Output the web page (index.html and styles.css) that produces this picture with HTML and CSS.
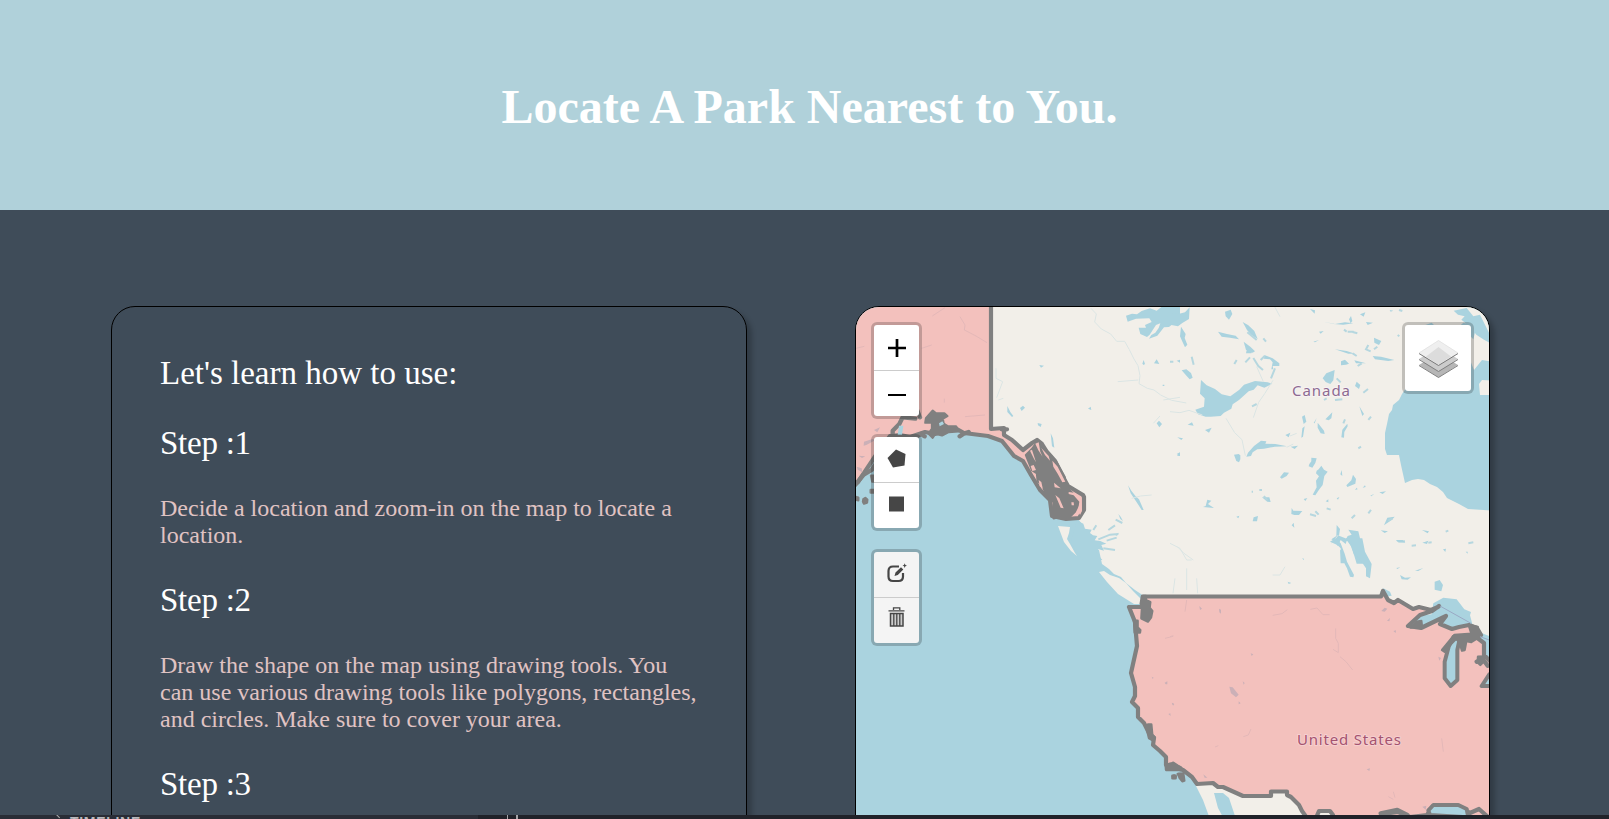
FILE: index.html
```html
<!DOCTYPE html>
<html lang="en">
<head>
<meta charset="utf-8">
<title>Locate A Park</title>
<link rel="stylesheet" href="styles.css">
</head>
<body>
<header class="hero"><h1 class="hero-title">Locate A Park Nearest to You.</h1></header>
<main class="content">
  <section class="card guide">
    <h2 class="guide-heading">Let's learn how to use:</h2>
    <h2 class="guide-heading step">Step :1</h2>
    <p class="guide-text">Decide a location and zoom-in on the map to locate a location.</p>
    <h2 class="guide-heading step">Step :2</h2>
    <p class="guide-text">Draw the shape on the map using drawing tools. You can use various drawing tools like polygons, rectangles, and circles. Make sure to cover your area.</p>
    <h2 class="guide-heading step">Step :3</h2>
  </section>
  <section class="card map">
    <svg class="map-canvas" viewBox="856 307 633 520" width="633" height="520">
      <g class="tiles">
      <!-- Canadian mainland and islands -->
      <path class="land" d="M980 300V430L1010 440 1060 519H1078L1082 524 1083 532 1091 538 1093 545 1099 550 1102 564 1109 569 1114 574 1121 577 1126 583 1135 590 1144 596V604H1385L1500 660V511L1468 509 1459 504 1447 498 1443 492 1437 487 1430 484 1424 480 1418 479 1412 480 1405 483 1403 474 1401 465 1399 455 1387 455 1385 449 1385 433 1387 424 1389 414 1392 410 1393 405 1399 400 1402 394 1415 375 1462 340 1474 370 1482 360 1500 363V300Z"/>
      <path class="land" d="M1058 526L1070 527 1069 533 1067 539 1070 544 1075 553 1077 556 1071 551 1064 542Z M1099 572L1104 571 1110 575 1119 578 1126 583 1133 591 1141 599 1142 604 1134 604 1118 594 1107 582Z M1479 384L1482 380 1500 381V395L1480 395Z"/>
      <path class="land" d="M1195 784L1203 800 1210 819H1340V808L1290 785 1213 781Z"/>
      <path class="water" d="M1214 793L1223 793 1229 798 1236 819H1224L1218 808Z"/>
      <!-- lakes, upper centre -->
      <g transform="translate(850 300) scale(.33333)">
        <path class="water" d="M828 47l18-6 15 2 14-10 25-8 20 7 15-12 55 0v35l-20 0 5 12-18 14-15 1-20 25-25 9 7-11 12-7 10-14 5-14-13 5-19 29-8 7-20-9-5-19 22 0-3-8 20-9-7-11-40 1-25 9z M877 191l4-11 4 12-4 3z M912 190l8-12 8 14z M920 370l7-8 9 10-8 10z M834 556l10 16 13 17 10 9 14 32-6 0-14-22-19-28z M472 318l9 18 9 12-4 3-14-15z M510 324l9-7 6 6-10 10z M563 369l12 3-3 9-8-5z M602 400l7 15 4 28-7-4z M805 642l7 8 7 13-8-6z M568 195l14 2-9 6z M714 326l8-6 2 10z M980 182l10-3v9z M980 462l10-5v11z M938 254h5v4h-5z M795 705l12-7-6 9z"/>
        <path class="river" d="M723 25l16 17-5 24 20 21 28 15 18 22 24 0 14 25 14 28 12 20 6 30-3 24 25 14 20 5 20 15 33 16 44 8 M438 205v30l20 10-18 48 M445 300l15-5 M803 245l62-5 M940 300l50-8 M845 595l27-7 33-3 M910 370l20-22"/>
        <path class="water" d="M680 661l20 10 5 15 20 3-5 10 9 7 13 2-8 13 17 2 18 8-15 4 8 17-18-5-5 12 18 21h-60l-35-50z"/>
        <path class="river strong" d="M745 718l35-14 25-2 M770 722l30-9 M730 690l9-14 M760 745l35 5 M797 659l20 10 M775 690l20-14"/>
      </g>
      <!-- lakes, upper right -->
      <g transform="translate(1170 300) scale(.33333)">
        <path class="water" d="M-8 38l33 4 20-5 14-15-2 35-20 12-13 10-32-6z M33 80l14 22-3 12 8 20-7 8-7-15-8-18z M35 211l14-3 14 11 5 14-9 5-9-10z M93 240l17 16 25 11 20 16 26 6 27-20 14-15 33-11 38 4 14 4-24 12-20-7-12 13-15 5-29 26-19 13-4 13-22 12-10 10-30 2-15 0-23-7-8-14 26-9 2-25-14-14z M229 470l5-12 18-20 21-16 16 2-3 7 30 1 35 7-37 1-32 6-20 2-14 9-5 11z M192 464l14-2 5 4 0 12-4 9-8-4z M458 235l11-15 25-10-4 31-9 11-14-6z M418 492l6-8 0-11 16 2-4 14-9 14-11-4z M440 512l6-4 8-11 8 12 11 6-10 13-5 27-11 14-11 17-8-2 12-22-2-20 9-13-9-9z M330 532l12-15 15 1-7 10-15 8z M165 35l17-6 5 13-10 17-10-10z M144 95l27 7 26 5 10 11-27-5-25-3z M218 66l17 10 18 17 10 24-20-13-12-14z M283 165l25 10 20 15 0 8-20 0 2 10-6 0 4-21-8-9-18-2z M221 125l20 15 14 14-7 4-20-8z M230 150l18 2-4 8-16 0z M535 689l30 5 12 50 17 47h-34l-15-50-17-23 5-10 12-4z M500 675l10 12-3 20 25 10-5 15-15-12-9 18-10-15-9-5 15-10z M510 748l12 15v27h-10z M608 168l25 2 40 10-18 3-40-5z M495 148l35 5 25 8-20 0z M513 184l12-5 12 12-9 3-15 2z M553 181l35 9-30 0z M612 113l22 10-7 12-14-7z M560 245l11 10-4 12-12-9z M568 319l14 23-5 6z M443 368l19 24 2 10-12-2-9-17z M396 350l8-5 5 20-8 7z M397 385l7-6-5 31-5 3z M431 369l9-15-6 16z M466 358l21-21-3 18-8 6z M517 389l15-18 1 8-10 17-1 17-8-1z M529 556l15-15 5-17 9 13-2 14-24 10z M511 523l4-13 2 18z M276 592l22 0 4 14-10-1z M99 621l8-3 5-19 12 3-10 10 18 12z M105 390l20-7-8 15z M53 374l13-7 5 10z M22 412l17 3-5 5z M21 467l9-9 0 10z M346 405l15-7-5 14z M362 440l22-3-10 10z M248 664l3-12 13-4-3 16z M199 650l9-3-3 8z M364 642l1-18 5 8 27 1-10 12-14 0z M365 676l6-8 2 15z M642 676l10-23 22-3-8 9z M756 690l21 4-4 6z M632 691l22 3-10 5z M555 570l5-7 3 5z M578 563l7-7 2 5z M601 587l12-6-9 8z M628 577l20-3-10 8z M467 604l8-6v9z M500 595l8-4-4 8z M401 597l11-3-6 9z M430 125l17-5-12 7z M447 95l14-2-9 8z M461 65l34 7 30-5 25 3-30 4-29-2z M420 27l15 4-1 10z M537 58l6-10 4 15-5 7z M570 43l16-6-5 13z M588 66l21 2-16 7z M659 30l11 2-8 3z M851 32l39-8 20 25 20-5 30 60v25l-18-10-23-15-20-25-25-20 10-10-20-5z M760 77l25-9 10 10z M870 77l10-9 40 10-10 40z"/>
        <path class="river" d="M0 335l30 3 27-7 40 14 M168 355l26 43 22 21 10 48 M250 353l16-46 18-26 25-40 M22 740l20 20 28 20 M260 200l20 45 M314 20l16 30 M350 442l20-10 M360 408l20-8 M485 730l20-25"/>
        <path class="river strong" d="M232 97l28 23 M200 180l-7 12 M250 174l15 24 14 12 M545 655l10-10 M603 630l-8 10 M655 662l13-7 M685 725l20-1 M725 737l13-1 M775 728l10-1 M827 695l8-3 M895 730l15-3 M0 185l10 0 M65 170l6 24 M470 625l12 4 M420 643l18 5 M446 644l-10-10 M580 278l14-11 M595 360l8-10 M495 300l22-2 M470 295l-8 5 M565 445l8-5 M595 135l-7 13 14 6 M240 172l-14 15 M260 312l-14 7 M282 588l10 14 M268 570h8 M245 575h4 M683 105l5 4 M687 30l10 3 M533 95h18 M315 205l-12 30 M272 180l12-12 M280 115l8 10 M520 370l5-12 M548 160l12 8 M575 190l-12 8 M622 140l-10 8 M530 95l-8-6 M562 100l-14-4 M500 235l12 12"/>
      </g>
      <g transform="translate(1170 540) scale(.33333)">
        <path class="water" d="M530-5h47l8 40 20 37-5 43-12-6 0-24-21-31-15-10-12-33z M480 5l17-10 15 15 12 31 7 24 21 40-2 7-10-2-9-25-15-28-4-32-10-10z M794 125l15-5 10 15-5 19-20-5z M790 190l30-17 40 5 23 30 20 8-3 10 8 30-48 22-90-10-50 5-10 25-55-5 40-45 40-20 50-5z M640 145l20 10 5 12-20 3-14-15z M690 105l15 8 18-1-10 7-18-1z M850 285l30 0-13 45v90l-25 20-20-30v-70z M925 275l50 20v100l-55-60z M678 0h20l8 8-24-3z M735 92l25-8-15 9z M397 53l5 4-2 4z M353 125l11 4-8 3z M757 8l18-6-4 10z M819 28l9-2-2 10z M679 84l12-2-9 5z M887 35h6v6z"/>
        <path class="river" d="M0 10l30 15 20 35 15 0 M345 80l-15 25-22 0 M50 85v65 M80 115l3 45 M15 115l-6 45"/>
      </g>
      </g>
      <!-- Alaska -->
      <path class="state" d="M850 300H991V429L997 428.500 1004 428 1004 435 1012 440 1023 450 1032 443 1037 440 1042 444 1047 452 1055 461 1063 477 1068 486 1083 495 1084 497V510L1079 518 1066 519 1052 516 1050 500 1040 490 1031 475 1023 461 1014 456 1002 441 988 436 964 433 955 428 935 434 925 432 910 437 900 435 890 436 878 452 858 482 850 488Z"/>
      <g transform="translate(850 300) scale(.33333)">
        <path class="blotch" d="M228 355l20-23 10 8 25 0 9 8-14 8 3 15 12 8 25 0 8 15-30 2-20 10-20-5-8 12-12-12 10-15 0-18-20 0z M528 465l20-20 10-15 16 0 20 28 25 28 25 45 5 30 15 15 25 30-15 30-15 15-22 3-30-12 5-35-22-20-12-30-15-15-2-22-15-10z"/>
        <path class="border" d="M15 555l25-30 25-15 10-15 M128 410l0-18 20-20 10-20 38 4 M210 352l-10-25 M200 410l12-8 12 7 M329 409l12-8 15-5 M455 388h16"/>
        <path class="blotch" d="M63 527h12v18h-8z M62 570h12v8h-12z M40 598l6-4 6 5-1 9-9 3-3-6z M15 590l10 3v8l-10-2z M606 641l10-4 6 5-2 11-9 2z"/>
        <path class="water" d="M143 405l4-28 13 0-4 28z M267 370l10-6 5 8-13 7z"/>
        <path class="pink" d="M540 452l6-3 12 38-7-12z M556 431l10-4 5 28 7 15-13-19z M574 444l22 24 4 14-15-17z M607 482l16 18 23 45-9 2-14-26-13-21z M542 498l9-3 7 15-11 3z M566 540l8 6 4 18-9-5z M612 548l20 17-18-3z M616 585l12 10 13 30-9-2z M656 576l16 2 22 15 2 40-6 12-6-12 4-28-17-19-15-4z M664 607l7 0 1 9-7 0z"/>
        <path class="tint" d="M42 425l25-8 10 3-28 15-8 2z M20 500l15 5 2 12-14-8z M26 467l20 2-10 5z M72 390l18-8-8 15z"/>
        <path class="trail" d="M330 50l15 25-2 15 35 18 33 20 M247 48l38-25 M283 296v12 M345 350l60-5 M215 145l30-10 M18 145l25-6"/>
      </g>
      <!-- contiguous states -->
      <path class="state" d="M1143 596.500H1381L1383 591 1388 600 1394 603 1398 600 1408 606 1413 609 1419 607 1431 610 1438 607 1439 606 1432 611 1420 615 1408 626 1421 628 1446 616 1440 624 1452 629 1459 627 1469 625 1477 628 1481 635 1476 637 1484 643 1484 655 1492 663V830H1384L1382 814 1398 812 1410 817 1427 815 1433 806 1458 806 1470 813 1479 809 1488 817 1492 830H1333V815L1330 811 1319 811 1316 818H1307L1302 811 1299 805 1291 797 1287 795 1287 791.500H1271V796H1243L1223 787H1218L1213 783 1197 784 1192 777 1183 770 1166 765 1166 757 1160 751 1153 745 1154 738 1149 733 1144 723 1138 717V708L1132 702 1135 696V687L1131 673 1137 646 1135 622 1129 607H1143Z"/>
      <g transform="translate(1170 540) scale(.33333)">
        <path class="lake-line" d="M871 288l-20 2-15 30-12 45v50l18 23 20-18v-90z"/>
        <path class="lake-line" d="M780 825l-5-14 15-16h75l25 12 5 25z M960 400l-25 38 25 0"/>
        <path class="border" d="M632 820l50-10 30 15 M920 365l18-8 15 20"/>
        <path class="blotch" d="M816 330l37-45 52-4 24 9-25 16-15-3-5 27-8 2-8-27-10-8-20 20-14 18z M740 245l14-2 2 17-34 3z M924 350l19-1-2 16-10 10-8-8z M896 255l27 6 3 27-22-8z"/>
        <path class="blotch" d="M0 672l10-4 28 19v3l-38-2z M24 702l16-2 3 22-6 2-8-10z M7 707h10v8h-10z"/>
        <path class="boundary" d="M810 198l93 52 M930 290l28 10"/>
        <path class="tint" d="M178 440l10 2 18 22-8 8-15-12z M634 213l10-10 8 3-8 9z M147 206l6 3 0 12-5-4z M88 198l8 8-6 4z M670 273l8-2-1 8z M651 242l9-8-2 10z M757 800l12-3-2 12z M100 703l12 10-8 0z M6 488l7 5-5 3z M218 424l6 5-3 5z M206 484l6 6-6 3z M805 350l8 4-5 8z M242 340l8 3-5 5z M590 688l10-3-2 8z"/>
        <path class="trail" d="M308 226l28-5 16-12 M421 208l20-4 18 20 20 0 M497 265v30l8 15 0 28-16-10 M510 350l18 15 20 25 M220 590l15-5 8-18 M815 595l5 40 M135 621l10-4 M45 215l5-35 M0 290l10-3 M670 755l5 18 M655 770l15 8"/>
      </g>
      <g transform="translate(850 540) scale(.33333)">
        <path class="blotch" d="M876 168l12 0 0 12 13 6-2 17 8 10-4 20-9 12-20-10 2-34-4-10z M852 242l11 0 0 20 8 8-1 8-16 0z M894 553l10 0 3 32 8 7-5 10-13-7-6-25z M947 676l13-5 32 10v9h-44z M968 709l5-3 4 4-5 4z M983 702h9v8z"/>
        <path class="tint" d="M905 410l6 3-3 4z M944 428l8-4 0 9-5 0z M965 488l7 3-2 6z M955 522l6-2 1 8z M948 484l6 3z"/>
        <path class="trail" d="M945 295l25-6"/>
      </g>
      <text class="place" x="1292" y="395.500" textLength="58">Canada</text>
      <text class="place place-us" x="1297" y="745" textLength="104">United States</text>
    </svg>
    <div class="tools">
      <div class="toolbar">
        <a class="tool"><svg width="45" height="45"><path d="M14 23H32M23 14V32" stroke="#000" stroke-width="2.700"/></svg></a>
        <a class="tool"><svg width="45" height="45"><path d="M14 24H32" stroke="#000" stroke-width="2.200"/></svg></a>
      </div>
      <div class="toolbar">
        <a class="tool"><svg width="45" height="45"><path d="M22 12.500L31.500 17 30.500 28.500 19 30.500 13.500 21Z" fill="#464646"/></svg></a>
        <a class="tool"><svg width="45" height="45"><path d="M15 13.500H30V28.500H15Z" fill="#464646"/></svg></a>
      </div>
      <div class="toolbar edit">
        <a class="tool"><svg width="45" height="45"><path d="M25 14.500H19Q14.500 14.500 14.500 19V24.500Q14.500 29 19 29H24.500Q29 29 29 24.500V21" fill="none" stroke="#464646" stroke-width="2.200"/><path d="M20.500 24L21.500 20.500 27 15.300 29.300 17.600 23.800 23Z M28.500 13.500L30 13 30.700 11.300 31.400 13 33 13.500 31.400 14.200 30.700 16 30 14.200Z" fill="#464646"/></svg></a>
        <a class="tool"><svg width="45" height="45"><path d="M16.500 15.500H29V28H16.500Z" fill="#ccc" stroke="#464646" stroke-width="1.500"/><path d="M14.500 12.800H30.500M19.500 12V9.800H25.800V12M19.800 16V28M22.800 16V28M25.800 16V28" fill="none" stroke="#464646" stroke-width="1.300"/></svg></a>
      </div>
    </div>
    <a class="layers"><svg width="66" height="66">
      <path d="M14 40L33.500 52.500 53 40 33.500 28Z" fill="#b6b6b6"/><path d="M14 40.500L33.500 52.500 53 40.500" fill="none" stroke="#808080"/>
      <path d="M14 34L33.500 46.500 53 34 33.500 22Z" fill="#ccc"/><path d="M14 34.500L33.500 46.500 53 34.500" fill="none" stroke="#808080"/>
      <path d="M14 28L33.500 40.500 53 28 33.500 15.500Z" fill="#efefef"/><path d="M21 31.500L33.500 22 46 31.500 33.500 40Z" fill="#dcdcdc"/><path d="M14 28.500L33.500 40.500 53 28.500" fill="none" stroke="#777"/><path d="M14 28L33.500 15.500 53 28" fill="none" stroke="#ddd" stroke-width=".7"/>
    </svg></a>
  </section>
</main>
<footer class="strip"><span class="strip-panel"><span class="strip-arrow"></span><span class="strip-label">TIMELINE</span></span><span class="strip-cursor"></span></footer>
</body>
</html>
```
FILE: styles.css
```css
* { box-sizing: border-box; }
body {
  margin: 0;
  height: 819px;
  overflow: hidden;
  display: flex;
  flex-direction: column;
  background: #3f4c59;
  font-family: "Liberation Serif", "Times New Roman", serif;
}
.hero {
  flex: 0 0 210px;
  display: flex;
  align-items: center;
  justify-content: center;
  padding: 3px 0 0 10px;
  background: #b0d1da;
}
.hero-title { margin: 0; color: #fff; font-size: 48px; line-height: 56px; white-space: nowrap; }
.content {
  flex: 0 0 605px;
  display: grid;
  grid-template-columns: 636px 635px;
  column-gap: 108px;
  padding: 96px 0 0 111px;
  overflow: hidden;
}
.card {
  height: 700px;
  border: 1px solid #000;
  border-radius: 24px;
  box-shadow: 5px 5px 5px rgba(0, 0, 0, .22);
}
.guide { padding: 48px 47px 0 48px; }
.guide-heading { margin: 0 0 33px; color: #fff; font-size: 33px; font-weight: 400; line-height: 37px; }
.step { letter-spacing: -.25px; }
.guide-text { margin: 0 0 33px; color: #e0c3c3; font-size: 24px; line-height: 27px; }
.map { position: relative; overflow: hidden; background: #aad3df; }
.map-canvas { display: block; }
.tiles { filter: blur(.45px); }
.land { fill: #f2efe9; }
.water { fill: #aad3df; }
.pink { fill: #f3c1bd; }
.river { fill: none; stroke: #dbe5e4; stroke-width: 3; }
.river.strong { stroke: #b6d7df; stroke-width: 6; }
.state { fill: #f3c1bd; stroke: #808080; stroke-width: 4.2; stroke-linejoin: round; }
.border { fill: none; stroke: #808080; stroke-width: 13; stroke-linejoin: round; stroke-linecap: round; }
.lake-line { fill: #aad3df; stroke: #808080; stroke-width: 12; stroke-linejoin: round; }
.blotch { fill: #808080; stroke: #808080; stroke-width: 7; stroke-linejoin: round; }
.tint { fill: #cbb0b7; }
.trail { fill: none; stroke: #e3b8b8; stroke-width: 3; }
.boundary { fill: none; stroke: #9aa9c4; stroke-width: 3; }
.place {
  fill: #8d6a91;
  stroke: #f7f3f3;
  stroke-width: 2px;
  paint-order: stroke;
  font: 400 15px "Noto Sans", sans-serif;
}
.place-us { fill: #a45370; stroke: #f6cfcf; }
.tools { position: absolute; top: 15px; left: 15px; display: flex; flex-direction: column; gap: 15px; }
.toolbar, .layers { border: 3px solid rgba(0, 0, 0, .2); border-radius: 6px; background: #fff; background-clip: padding-box; }
.toolbar { width: 51px; height: 97px; }
.tool { display: block; height: 45px; }
.tool + .tool { height: 46px; border-top: 1px solid #ccc; }
.tool svg, .layers svg { display: block; }
.edit { margin-top: 3px; background-color: #f4f4f4; }
.layers { position: absolute; top: 15px; right: 15px; width: 72px; height: 72px; }
.strip { flex: 0 0 4px; display: flex; overflow: hidden; background: #202229; }
.strip-panel { flex: 0 0 478px; display: flex; padding-left: 54px; background: #2a2d36; }
.strip-arrow { width: 5px; height: 5px; border-top: 1px solid #aaa; transform: rotate(45deg); }
.strip-label { margin-left: 11px; color: #b9b9bd; font: 700 14px/14px "Liberation Sans", sans-serif; letter-spacing: .7px; }
.strip-cursor { width: 11px; margin-left: 29px; border: solid #a5a5a8; border-width: 0 2px 0 1px; }
```
